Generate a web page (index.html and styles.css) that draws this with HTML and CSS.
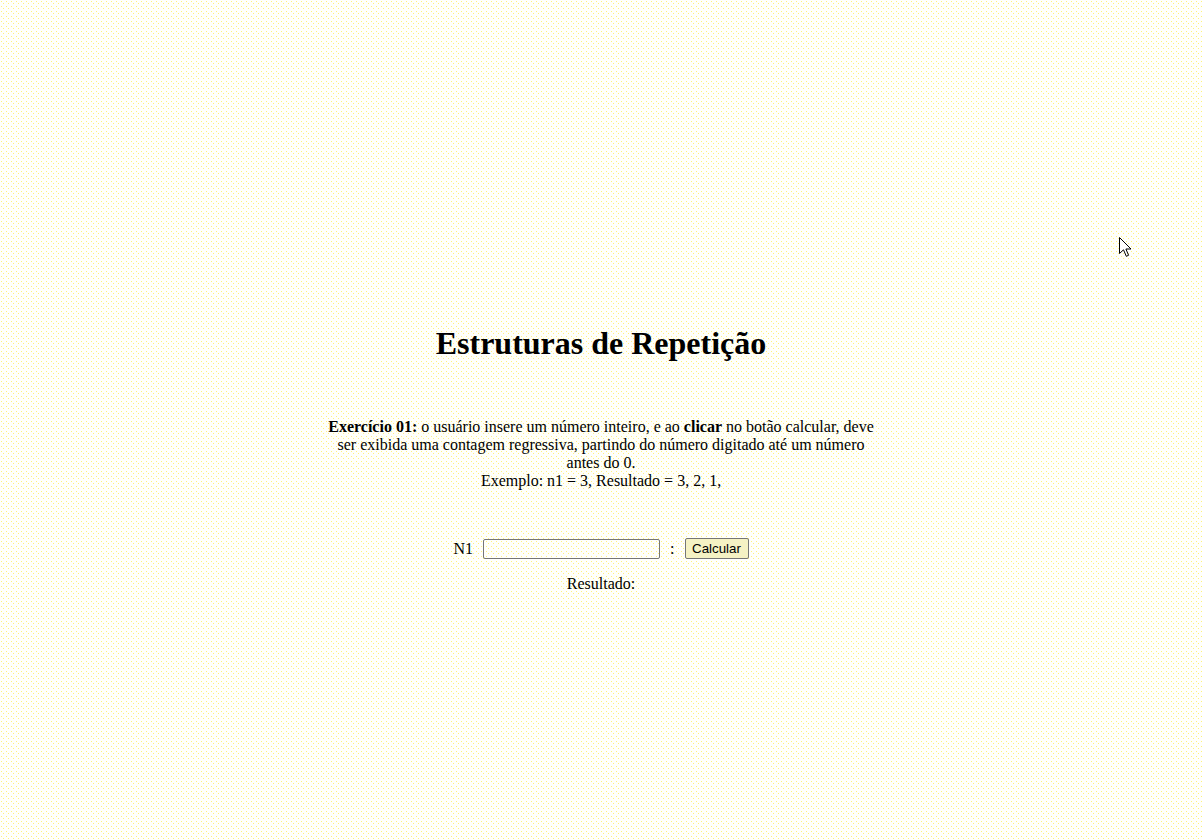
FILE: index.html
```html
<!DOCTYPE html>
<html lang="pt-BR">
<head>
<meta charset="utf-8">
<title>Estruturas de Repetição</title>
<link rel="stylesheet" href="styles.css">
</head>
<body>
<main class="page">
  <h1 class="title">Estruturas de Repetição</h1>
  <p class="desc"><strong>Exercício 01:</strong> o usuário insere um número inteiro, e ao <strong>clicar</strong> no botão calcular, deve ser exibida uma contagem regressiva, partindo do número digitado até um número antes do 0.<br>Exemplo: n1 = 3, Resultado = 3, 2, 1,</p>
  <div class="form-row">
    <label class="label" for="n1">N1</label>
    <input class="field" id="n1" type="text">
    <span class="colon">:</span>
    <button class="btn" type="button">Calcular</button>
  </div>
  <div class="result">Resultado:</div>
</main>
<svg class="cursor" width="13" height="21" viewBox="0 0 13 21" aria-hidden="true">
  <path d="M0.5 0.5 L0.5 16.5 L4.5 12.8 L7.3 19.3 L9.6 18.3 L6.9 12 L12 12 Z" fill="#fff" stroke="#000" stroke-width="1" stroke-linejoin="miter"/>
</svg>
</body>
</html>
```

FILE: styles.css
```css
html, body {
  margin: 0;
  padding: 0;
}
body {
  width: 1202px;
  height: 840px;
  overflow: hidden;
  position: relative;
  background-color: #fffffb;
  background-image:
    radial-gradient(circle at 0.5px 0.5px, #fff27a 0.7px, transparent 0.8px),
    radial-gradient(circle at 0.5px 0.5px, #fff27a 0.7px, transparent 0.8px);
  background-size: 5px 5px, 5px 5px;
  background-position: 1px 1px, 3px 3px;
  font-family: "Liberation Serif", "Times New Roman", serif;
  font-size: 16px;
  color: #000;
}
.page {
  display: flex;
  flex-direction: column;
  align-items: center;
  padding-top: 325px;
}
.title {
  margin: 0;
  font-size: 32px;
  font-weight: bold;
  line-height: 37px;
}
.desc {
  width: 552px;
  margin: 56px 0 0;
  text-align: center;
  line-height: normal;
}
.form-row {
  display: flex;
  align-items: center;
  margin-top: 48px;
  height: 21px;
}
.label {
  margin-right: 10px;
}
.field {
  box-sizing: border-box;
  width: 177px;
  height: 20px;
  margin: 0;
  padding: 1px 2px;
  border: 1px solid #767676;
  border-radius: 2px;
  background: transparent;
  font-family: "Liberation Sans", Arial, sans-serif;
  font-size: 13.33px;
}
.colon {
  margin: 0 10px 0 10px;
}
.btn {
  box-sizing: border-box;
  width: 64px;
  height: 21px;
  margin: 0;
  padding: 0 6px;
  border: 1px solid #767676;
  border-radius: 2px;
  background: #f5f2c4;
  color: #000;
  font-family: "Liberation Sans", Arial, sans-serif;
  font-size: 13.33px;
}
.result {
  margin-top: 16px;
  line-height: normal;
}
.cursor {
  position: absolute;
  left: 1119px;
  top: 237px;
}
```
